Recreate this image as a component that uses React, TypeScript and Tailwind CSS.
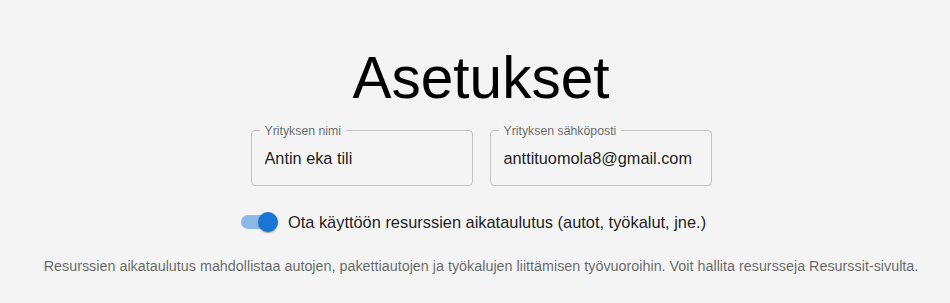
import React from 'react';

const TextField = ({ label, value }: { label: string; value: string }) => (
  <fieldset className="w-[222px] h-[61px] rounded border border-[#c4c4c4] px-[8px]">
    <legend className="px-[5px] text-[12.3px] leading-[12px] text-black/60">
      {label}
    </legend>
    <input
      defaultValue={value}
      className="w-full h-[43px] bg-transparent px-[5px] text-[16.3px] text-black/90 outline-none"
    />
  </fieldset>
);

const App = () => {
  return (
    <div className="min-h-screen bg-[#f4f4f4] pl-[12px] font-['Liberation_Sans',Arial,sans-serif]">
      <div className="flex flex-col items-center pt-[49px]">
        <h1 className="text-[58.5px] leading-none text-black">Asetukset</h1>

        <div className="mt-[17px] flex gap-[17px]">
          <TextField label="Yrityksen nimi" value="Antin eka tili" />
          <TextField label="Yrityksen sähköposti" value="anttituomola8@gmail.com" />
        </div>

        <label className="mt-[17px] flex h-[38px] items-center pl-[1px] pr-[16px] cursor-pointer">
          <span className="relative h-[14px] w-[34px] rounded-full bg-[#8cb9e8]">
            <span className="absolute left-[17px] -top-[3px] h-[20px] w-[20px] rounded-full bg-[#1976d2] shadow-[0_2px_1px_-1px_rgba(0,0,0,0.2),0_1px_1px_0_rgba(0,0,0,0.14),0_1px_3px_0_rgba(0,0,0,0.12)]" />
          </span>
          <span className="ml-[13px] text-[16.4px] leading-6 text-black/90">
            Ota käyttöön resurssien aikataulutus (autot, työkalut, jne.)
          </span>
        </label>

        <p className="mt-[15px] text-[14.35px] leading-5 text-black/60">
          Resurssien aikataulutus mahdollistaa autojen, pakettiautojen ja työkalujen liittämisen työvuoroihin. Voit hallita resursseja Resurssit-sivulta.
        </p>
      </div>
    </div>
  );
};

export default App;
